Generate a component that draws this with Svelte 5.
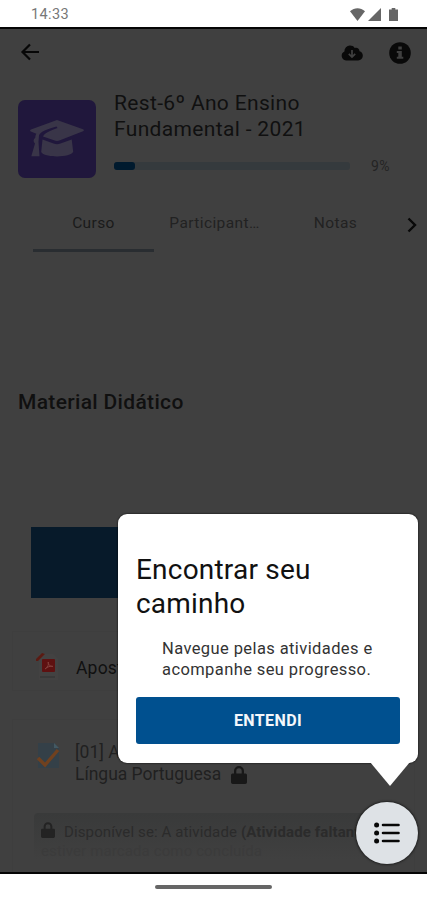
<script lang="ts">
	const tabs = ['Curso', 'Participant…', 'Notas'];
	let active = $state('Curso');
	let progress = 9;
</script>

<div class="phone">
	<div class="status">
		<span class="time">14:33</span>
		<svg class="wifi" viewBox="0 0 15 13"><path d="M0 3.2C4.5-.7 10.5-.7 15 3.2L7.5 13z" /></svg>
		<svg class="signal" viewBox="0 0 13 13"><path d="M13 0v13H0z" /></svg>
		<svg class="battery" viewBox="0 0 9 13"><path d="M2.7 0h3.6v1.5H9V13H0V1.5h2.7z" /></svg>
	</div>

	<main>
		<header>
			<svg class="back" viewBox="0 0 20 18"><path d="M10 1.5L2.5 9l7.5 7.5M2.5 9H19" /></svg>
			<svg class="cloud" viewBox="0 0 22 16">
				<path d="M5 15.5A4.8 4.8 0 0 1 3.4 6.4 5.5 5.5 0 0 1 9 .6c2 0 3.6.8 4.7 2.3 2.5-.8 4.8.7 4.8 3.3 2 .5 3.3 2.2 3.3 4.4 0 2.7-2 4.9-4.7 4.9z" />
				<path class="cut" d="M11 5v6.8M7.8 8.9l3.2 3.2 3.2-3.2" />
			</svg>
			<svg class="info" viewBox="0 0 22 22">
				<circle cx="11" cy="11" r="10.8" />
				<path class="cut-fill" d="M9.3 4.4h3.5v3.1H9.3zM7.8 8.9h5v5.8h1.5v2.1H7.8v-2.1h1.5V11H7.8z" />
			</svg>
		</header>

		<section class="course">
			<div class="thumb">
				<svg viewBox="0 0 54 38">
					<path d="M27 0L53 9.2c1.2.5 1.2 1.5 0 2L30 20.3c-2 .8-4 .8-6 0L13 16.4c1.6-3.5 7-5.6 14.5-8.4l-1-1.4C17 9.3 10.5 11.8 9 15.3L8.5 22l1 14.2H1.3L5 23.5c-2-1.8-1.7-4.2.2-5.4.1-2 .5-3.3 1.2-4.3L.8 11.5c-1-.5-1-1.5.2-2z" />
					<path d="M12.5 19.5l11 4.1c2.3.9 4.7.9 7 0l11.2-4.2 1.5 12.4C41 37.8 14 38 11.2 32z" />
				</svg>
			</div>
			<div class="details">
				<h1>Rest-6º Ano Ensino<br />Fundamental - 2021</h1>
				<div class="progress">
					<div class="track"><div class="fill" style="width: {progress}%"></div></div>
					<span>{progress}%</span>
				</div>
			</div>
		</section>

		<nav>
			{#each tabs as tab}
				<button class:active={tab === active} onclick={() => (active = tab)}>{tab}</button>
			{/each}
			<svg class="next" viewBox="0 0 10 16"><path d="M1.5 1.5L8 8l-6.5 6.5" /></svg>
		</nav>

		<h2>Material Didático</h2>
		<div class="banner"></div>

		<div class="card file">
			<svg class="pdf" viewBox="0 0 24 28">
				<path fill="#434242" d="M3 1h14l5 5v21H3z" />
				<rect x="6" y="6" width="13" height="13" rx="1" fill="#5e1111" />
				<path d="M0 8V6L6 0l3 1-7 7z" fill="#5a1a12" />
				<path d="M9 16c3-2 4-5 3.4-7-1.3 1 1 4.5 4.5 4.4-2.5-.6-5.5.4-7.9 2.6z" fill="none" stroke="#84403c" />
				<path d="M4 24h15" stroke="#363636" stroke-width="1.4" />
			</svg>
			<span>Apostila</span>
		</div>

		<div class="card task">
			<div class="row">
				<svg class="check" viewBox="0 0 24 28">
					<path fill="#344048" d="M2 2h16l5 5v20H2z" />
					<path fill="#435963" d="M18 2v5h5z" />
					<path d="M2 17l7 7L22 9" fill="none" stroke="#70411f" stroke-width="3.4" />
				</svg>
				<p>
					[01] Atividade de<br />Língua Portuguesa
					<svg class="lock" viewBox="0 0 16 18"><path fill-rule="evenodd" d="M1.5 7.5H3V5a5 5 0 0 1 10 0v2.5h1.5Q16 7.5 16 9v7.2q0 1.8-1.8 1.8H1.8Q0 18 0 16.2V9q0-1.5 1.5-1.5zm3.8 0h5.4V5a2.7 2.7 0 0 0-5.4 0z" /></svg>
				</p>
			</div>
			<div class="restriction">
				<svg class="lock" viewBox="0 0 16 18"><path fill-rule="evenodd" d="M1.5 7.5H3V5a5 5 0 0 1 10 0v2.5h1.5Q16 7.5 16 9v7.2q0 1.8-1.8 1.8H1.8Q0 18 0 16.2V9q0-1.5 1.5-1.5zm3.8 0h5.4V5a2.7 2.7 0 0 0-5.4 0z" /></svg>
				<div class="condition">Disponível se: A atividade <b>(Atividade faltante)</b></div>
				<div class="faded">estiver marcada como concluída</div>
			</div>
		</div>
	</main>

	<div class="system-nav"><i></i></div>

	<div class="popover">
		<h3>Encontrar seu<br />caminho</h3>
		<p>Navegue pelas atividades e<br />acompanhe seu progresso.</p>
		<button>ENTENDI</button>
	</div>
	<button class="fab" aria-label="Índice do curso">
		<svg viewBox="0 0 26 22">
			<path d="M9 3H24.5M9 11H24.5M9 19H24.5" />
			<circle cx="2.6" cy="3" r="2.5" /><circle cx="2.6" cy="11" r="2.5" /><circle cx="2.6" cy="19" r="2.5" />
		</svg>
	</button>
</div>

<style>
	:global(body) {
		margin: 0;
		background: #fff;
	}
	.phone {
		position: relative;
		width: 427px;
		height: 900px;
		overflow: hidden;
		display: flex;
		flex-direction: column;
		background: #fff;
		font-family: Roboto, sans-serif;
	}
	h1,
	h2,
	h3,
	p {
		margin: 0;
		font-weight: 400;
	}
	svg {
		display: block;
		flex: none;
	}
	button {
		border: 0;
		padding: 0;
		background: none;
		font-family: inherit;
	}
	.status {
		height: 27px;
		display: flex;
		align-items: center;
		padding: 2px 29px 0 31px;
		box-sizing: border-box;
		color: #777;
		fill: #666;
	}
	.time {
		flex: 1;
		font-size: 14.5px;
		letter-spacing: 0.4px;
	}
	.wifi {
		width: 15px;
		height: 13px;
	}
	.signal {
		width: 13px;
		height: 13px;
		margin: 0 8px 0 3px;
	}
	.battery {
		width: 9px;
		height: 13px;
	}
	main {
		height: 847px;
		box-sizing: border-box;
		border-top: 2px solid #050505;
		border-bottom: 2px solid #050505;
		background: #404040;
		overflow: hidden;
		color: #101010;
	}
	header {
		height: 71px;
		box-sizing: border-box;
		padding: 13px 16px 0 20px;
		display: flex;
		align-items: flex-start;
	}
	.back {
		width: 20px;
		height: 18px;
		margin: 1px auto 0 0;
		fill: none;
		stroke: #070707;
		stroke-width: 2.2;
	}
	.cloud {
		width: 22px;
		height: 16px;
		margin: 3px 26px 0 0;
		fill: #090909;
	}
	.cut {
		fill: none;
		stroke: #404040;
		stroke-width: 1.7;
	}
	.info {
		width: 22px;
		height: 22px;
		fill: #090909;
	}
	.cut-fill {
		fill: #404040;
	}
	.course {
		height: 96px;
		display: flex;
		padding-left: 18px;
	}
	.thumb {
		width: 78px;
		height: 78px;
		border-radius: 7px;
		background: #20173c;
		display: flex;
		align-items: center;
		justify-content: center;
		margin-right: 18px;
	}
	.thumb svg {
		width: 54px;
		height: 38px;
		fill: #393548;
	}
	h1 {
		margin-top: -10px;
		font-size: 21px;
		line-height: 26px;
		letter-spacing: 0.34px;
		white-space: nowrap;
	}
	.progress {
		display: flex;
		align-items: center;
		margin-top: 16px;
		height: 16px;
		font-size: 14px;
		letter-spacing: 0.3px;
		color: #242424;
	}
	.track {
		width: 236px;
		height: 8px;
		border-radius: 3px;
		background: #353a3d;
		margin-right: 21px;
	}
	.fill {
		height: 100%;
		border-radius: 3px;
		background: #001a2e;
	}
	nav {
		display: flex;
		height: 56px;
		padding-left: 33px;
		align-items: stretch;
	}
	nav button {
		width: 121px;
		padding-top: 1px;
		box-sizing: border-box;
		border-bottom: 3px solid transparent;
		font-size: 15.5px;
		letter-spacing: 0.4px;
		color: #222;
	}
	nav button.active {
		border-color: #292d31;
		color: #1a1a1a;
	}
	nav .next {
		width: 10px;
		height: 16px;
		margin: 21px 0 0 11px;
		fill: none;
		stroke: #080808;
		stroke-width: 2.4;
	}
	h2 {
		margin: 136px 0 0 18px;
		font-size: 21px;
		line-height: 28px;
		font-weight: 500;
		letter-spacing: 0.33px;
	}
	.banner {
		width: 380px;
		height: 71px;
		margin: 111px 0 33px 31px;
		background: #071a2a;
	}
	.card {
		margin: 0 12px;
		box-sizing: border-box;
		border: 1px solid #3e3e3e;
	}
	.file {
		height: 60px;
		margin-bottom: 28px;
		padding: 21px 0 0 23px;
		display: flex;
		font-size: 17.5px;
		letter-spacing: 0.2px;
	}
	.pdf,
	.check {
		width: 24px;
		height: 28px;
	}
	.file span {
		margin: 5px 0 0 16px;
	}
	.task {
		height: 170px;
		padding: 21px 0 0 23px;
	}
	.row {
		display: flex;
	}
	.row p {
		margin: 0 0 0 15px;
		font-size: 17.5px;
		line-height: 22px;
		letter-spacing: -0.02px;
		color: #202020;
	}
	.row .lock {
		display: inline-block;
		width: 16px;
		height: 18px;
		margin-left: 5px;
		vertical-align: -4px;
		fill: #181818;
	}
	.restriction {
		display: grid;
		grid-template-columns: 14px 1fr;
		column-gap: 9px;
		margin: 28px 0 0 -2px;
		padding: 9px 0 0 7px;
		height: 38px;
		border-radius: 4px 4px 0 0;
		background: linear-gradient(#393a3a, #404040);
		font-size: 15px;
		line-height: 20px;
		letter-spacing: 0.12px;
		color: #2b2b2b;
		white-space: nowrap;
		overflow: hidden;
	}
	.restriction .lock {
		width: 14px;
		height: 16px;
		fill: #232323;
	}
	.faded {
		grid-column: 1 / 3;
		font-size: 15px;
		line-height: 16px;
		color: #3b3b3b;
	}
	.system-nav {
		flex: 1;
		display: flex;
		justify-content: center;
		align-items: center;
	}
	.system-nav i {
		width: 117px;
		height: 4px;
		border-radius: 2px;
		background: #666;
	}
	/* coach mark over the course index button */
	.popover {
		position: absolute;
		left: 118px;
		top: 514px;
		width: 300px;
		height: 249px;
		box-sizing: border-box;
		padding: 39px 18px 0;
		border-radius: 9px;
		background: #fff;
		box-shadow: 0 0 2px #000;
	}
	.popover::after {
		content: '';
		position: absolute;
		left: 252px;
		top: 248px;
		width: 40px;
		height: 24px;
		background: #fff;
		clip-path: polygon(0 0, 100% 0, 50% 100%);
	}
	h3 {
		font-size: 28px;
		line-height: 34px;
		letter-spacing: 0.2px;
		color: #111;
	}
	.popover p {
		margin: 18px 0 17px 26px;
		font-size: 16.5px;
		line-height: 20.5px;
		letter-spacing: 0.4px;
		color: #333;
		white-space: nowrap;
	}
	.popover button {
		display: block;
		width: 264px;
		height: 47px;
		border-radius: 3px;
		background: #00508f;
		color: #f4f7fb;
		font-size: 16px;
		font-weight: 700;
		letter-spacing: 0.4px;
	}
	.fab {
		position: absolute;
		left: 356px;
		top: 802px;
		width: 62px;
		height: 62px;
		border-radius: 50%;
		background: #dee2e6;
		box-shadow: 0 0 3px #000;
		display: flex;
		align-items: center;
		justify-content: center;
	}
	.fab svg {
		width: 26px;
		height: 22px;
		fill: #080808;
		stroke: none;
	}
	.fab path {
		stroke: #080808;
		stroke-width: 2.6;
		stroke-linecap: round;
	}
</style>
